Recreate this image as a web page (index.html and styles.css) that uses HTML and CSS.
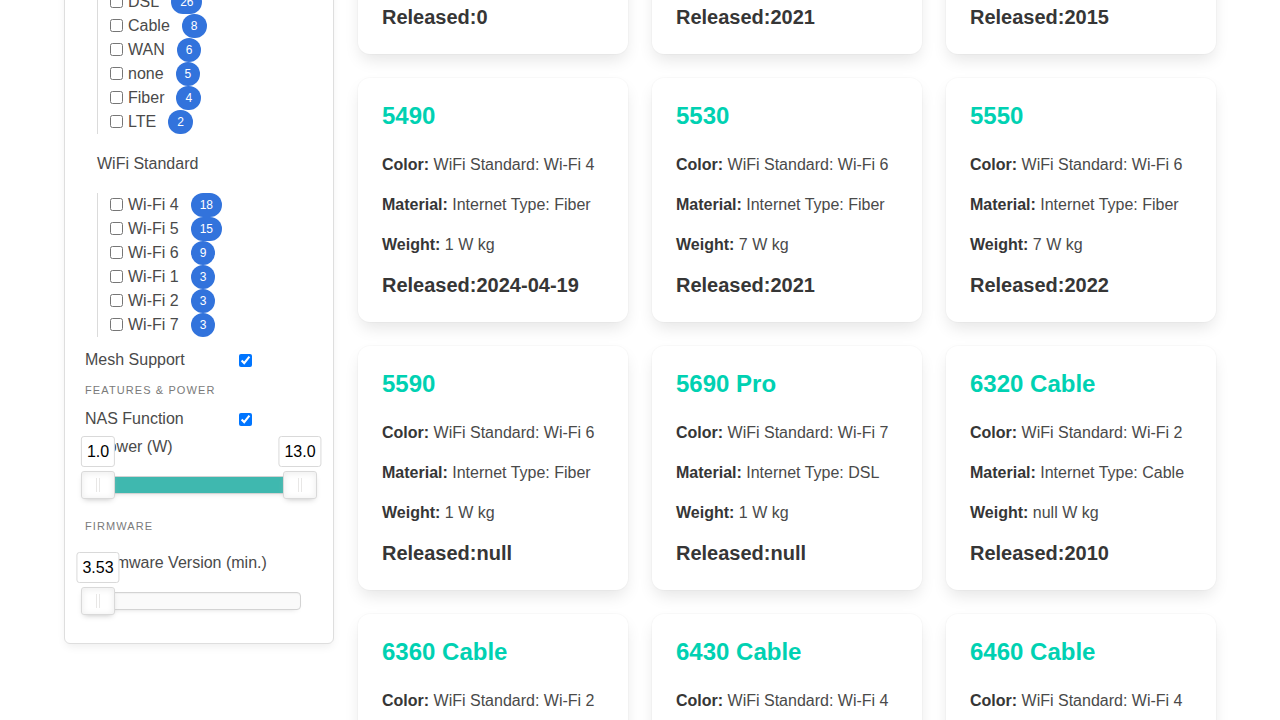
FILE: index.html
```html
<!DOCTYPE html>
<html lang="en">
<head>
<meta charset="utf-8">
<title>Routers</title>
<link rel="stylesheet" href="styles.css">
</head>
<body>
<div class="page">
  <aside class="sidebar">
    <h2 class="sidebar-title">Filters</h2>
    <input class="search" type="text" placeholder="Search models">
    <p class="menu-label">Connectivity</p>
    <div class="group">
      <div class="group-label">Internet Type</div>
      <ul class="opts">
        <li><input type="checkbox"><span>DSL</span><span class="badge">26</span></li>
        <li><input type="checkbox"><span>Cable</span><span class="badge">8</span></li>
        <li><input type="checkbox"><span>WAN</span><span class="badge">6</span></li>
        <li><input type="checkbox"><span>none</span><span class="badge">5</span></li>
        <li><input type="checkbox"><span>Fiber</span><span class="badge">4</span></li>
        <li><input type="checkbox"><span>LTE</span><span class="badge">2</span></li>
      </ul>
    </div>
    <div class="group">
      <div class="group-label">WiFi Standard</div>
      <ul class="opts">
        <li><input type="checkbox"><span>Wi-Fi 4</span><span class="badge">18</span></li>
        <li><input type="checkbox"><span>Wi-Fi 5</span><span class="badge">15</span></li>
        <li><input type="checkbox"><span>Wi-Fi 6</span><span class="badge">9</span></li>
        <li><input type="checkbox"><span>Wi-Fi 1</span><span class="badge">3</span></li>
        <li><input type="checkbox"><span>Wi-Fi 2</span><span class="badge">3</span></li>
        <li><input type="checkbox"><span>Wi-Fi 7</span><span class="badge">3</span></li>
      </ul>
    </div>
    <label class="toggle toggle-mesh"><span class="toggle-text">Mesh Support</span><input type="checkbox" checked></label>
    <p class="menu-label menu-label-features">Features &amp; Power</p>
    <label class="toggle toggle-nas"><span class="toggle-text">NAS Function</span><input type="checkbox" checked></label>
    <div class="field-label field-power">Power (W)</div>
    <div class="slider">
      <div class="connect" style="left:0%;right:0%"></div>
      <div class="handle" style="left:0%"><div class="tooltip">1.0</div></div>
      <div class="handle" style="left:100%"><div class="tooltip">13.0</div></div>
    </div>
    <p class="menu-label menu-label-firmware">Firmware</p>
    <div class="field-label field-firmware">Firmware Version (min.)</div>
    <div class="slider slider-last">
      <div class="handle" style="left:0%"><div class="tooltip">3.53</div></div>
    </div>
  </aside>

  <main class="grid">
    <div class="card"><h3 class="card-title">5330</h3><p><b>Color:</b> WiFi Standard: Wi-Fi 5</p><p><b>Material:</b> Internet Type: DSL</p><p><b>Weight:</b> 1 W kg</p><h4 class="released">Released:0</h4></div>
    <div class="card"><h3 class="card-title">5430</h3><p><b>Color:</b> WiFi Standard: Wi-Fi 6</p><p><b>Material:</b> Internet Type: DSL</p><p><b>Weight:</b> 7 W kg</p><h4 class="released">Released:2021</h4></div>
    <div class="card"><h3 class="card-title">5470</h3><p><b>Color:</b> WiFi Standard: Wi-Fi 5</p><p><b>Material:</b> Internet Type: Cable</p><p><b>Weight:</b> 1 W kg</p><h4 class="released">Released:2015</h4></div>

    <div class="card"><h3 class="card-title">5490</h3><p><b>Color:</b> WiFi Standard: Wi-Fi 4</p><p><b>Material:</b> Internet Type: Fiber</p><p><b>Weight:</b> 1 W kg</p><h4 class="released">Released:2024-04-19</h4></div>
    <div class="card"><h3 class="card-title">5530</h3><p><b>Color:</b> WiFi Standard: Wi-Fi 6</p><p><b>Material:</b> Internet Type: Fiber</p><p><b>Weight:</b> 7 W kg</p><h4 class="released">Released:2021</h4></div>
    <div class="card"><h3 class="card-title">5550</h3><p><b>Color:</b> WiFi Standard: Wi-Fi 6</p><p><b>Material:</b> Internet Type: Fiber</p><p><b>Weight:</b> 7 W kg</p><h4 class="released">Released:2022</h4></div>

    <div class="card"><h3 class="card-title">5590</h3><p><b>Color:</b> WiFi Standard: Wi-Fi 6</p><p><b>Material:</b> Internet Type: Fiber</p><p><b>Weight:</b> 1 W kg</p><h4 class="released">Released:null</h4></div>
    <div class="card"><h3 class="card-title">5690 Pro</h3><p><b>Color:</b> WiFi Standard: Wi-Fi 7</p><p><b>Material:</b> Internet Type: DSL</p><p><b>Weight:</b> 1 W kg</p><h4 class="released">Released:null</h4></div>
    <div class="card"><h3 class="card-title">6320 Cable</h3><p><b>Color:</b> WiFi Standard: Wi-Fi 2</p><p><b>Material:</b> Internet Type: Cable</p><p><b>Weight:</b> null W kg</p><h4 class="released">Released:2010</h4></div>

    <div class="card"><h3 class="card-title">6360 Cable</h3><p><b>Color:</b> WiFi Standard: Wi-Fi 2</p><p><b>Material:</b> Internet Type: Cable</p><p><b>Weight:</b> null W kg</p><h4 class="released">Released:2012</h4></div>
    <div class="card"><h3 class="card-title">6430 Cable</h3><p><b>Color:</b> WiFi Standard: Wi-Fi 4</p><p><b>Material:</b> Internet Type: Cable</p><p><b>Weight:</b> null W kg</p><h4 class="released">Released:2014</h4></div>
    <div class="card"><h3 class="card-title">6460 Cable</h3><p><b>Color:</b> WiFi Standard: Wi-Fi 4</p><p><b>Material:</b> Internet Type: Cable</p><p><b>Weight:</b> null W kg</p><h4 class="released">Released:2016</h4></div>
  </main>
</div>
</body>
</html>
```
FILE: styles.css
```css
* { box-sizing: border-box; }

html, body {
  margin: 0;
  padding: 0;
  background: #fff;
}

body {
  font-family: "Liberation Sans", Arial, sans-serif;
  font-size: 16px;
  color: #4a4a4a;
}

.page {
  max-width: 1152px;
  margin: -190px auto 0;
  display: flex;
  align-items: flex-start;
  gap: 24px;
}

/* ---------- Sidebar ---------- */
.sidebar {
  flex: 0 0 270px;
  width: 270px;
  padding: 20px;
  background: #fff;
  border: 1px solid #dedede;
  border-radius: 6px;
  box-shadow: 0 4px 10px -2px rgba(10, 10, 10, 0.08);
}

.sidebar-title {
  margin: 0 0 16px;
  font-size: 20px;
  line-height: 28px;
  font-weight: 700;
  color: #363636;
}

.search {
  display: block;
  width: 100%;
  height: 36px;
  margin: 0 0 10px;
  padding: 0 10px;
  border: 1px solid #dbdbdb;
  border-radius: 4px;
  font: inherit;
}

.menu-label {
  margin: 0 0 12px;
  font-size: 11px;
  line-height: 16px;
  letter-spacing: 0.1em;
  text-transform: uppercase;
  color: #7a7a7a;
}

.group {
  margin-left: 12px;
}

.group + .group {
  margin-top: 18px;
}

.group-label {
  line-height: 24px;
}

.opts {
  list-style: none;
  margin: 17px 0 0;
  padding: 0 0 0 12px;
  border-left: 1px solid #dbdbdb;
}

.opts li {
  display: flex;
  align-items: center;
  height: 24px;
  line-height: 24px;
}

.opts input {
  margin: 0 5px 2px 0;
  width: 13px;
  height: 13px;
}

.badge {
  display: inline-flex;
  align-items: center;
  justify-content: center;
  height: 24px;
  min-width: 24px;
  margin-left: 12px;
  padding: 0 9px;
  border-radius: 12px;
  background: #3273dc;
  color: #fff;
  font-size: 12px;
  line-height: 1;
}

.toggle {
  display: flex;
  align-items: center;
  height: 24px;
}

.toggle-text {
  width: 154px;
}

.toggle input {
  margin: 0;
  width: 13px;
  height: 13px;
}

.toggle-mesh {
  margin-top: 11px;
}

.menu-label-features {
  margin: 10px 0 0;
}

.toggle-nas {
  margin-top: 9px;
}

.field-label {
  margin-left: 12px;
  line-height: 24px;
}

.field-power {
  margin-top: 4px;
}

.menu-label-firmware {
  margin: 24px 0 0;
}

.field-firmware {
  margin-top: 17px;
}

/* ---------- Range slider ---------- */
.slider {
  position: relative;
  height: 18px;
  margin: 17px 12px 0;
  border: 1px solid #d3d3d3;
  border-radius: 4px;
  background: #fafafa;
  box-shadow: inset 0 1px 1px #f0f0f0, 0 3px 6px -5px #bbb;
}

.slider-last {
  margin-bottom: 13px;
}

.connect {
  position: absolute;
  top: 0;
  bottom: 0;
  background: #3fb8af;
}

.handle {
  position: absolute;
  top: -6px;
  width: 34px;
  height: 28px;
  margin-left: -17px;
  border: 1px solid #d9d9d9;
  border-radius: 3px;
  background: #fff;
  box-shadow: inset 0 0 1px #fff, inset 0 1px 7px #ebebeb, 0 3px 6px -3px #bbb;
}

.handle::before,
.handle::after {
  content: "";
  position: absolute;
  top: 6px;
  width: 1px;
  height: 14px;
  background: #e8e7e6;
}

.handle::before { left: 14px; }
.handle::after { left: 17px; }

.tooltip {
  position: absolute;
  bottom: 120%;
  left: 50%;
  transform: translateX(-50%);
  padding: 5px;
  border: 1px solid #d9d9d9;
  border-radius: 3px;
  background: #fff;
  color: #000;
  font-size: 16px;
  line-height: 19px;
  white-space: nowrap;
  text-align: center;
}

/* ---------- Product grid ---------- */
.grid {
  flex: 1 1 auto;
  display: grid;
  grid-template-columns: repeat(3, 1fr);
  gap: 24px;
}

.card {
  padding: 25px 24px;
  background: #fff;
  border-radius: 12px;
  box-shadow: 0 8px 16px -2px rgba(10, 10, 10, 0.1), 0 0 0 1px rgba(10, 10, 10, 0.02);
  color: #4a4a4a;
}

.card-title {
  margin: 0 0 24px;
  font-size: 24px;
  line-height: 26px;
  font-weight: 700;
  color: #00d1b2;
}

.card p {
  margin: 0 0 16px;
  line-height: 24px;
}

.card b {
  color: #363636;
  font-weight: 700;
}

.released {
  margin: 0;
  font-size: 20px;
  line-height: 24px;
  font-weight: 700;
  color: #363636;
}
```
